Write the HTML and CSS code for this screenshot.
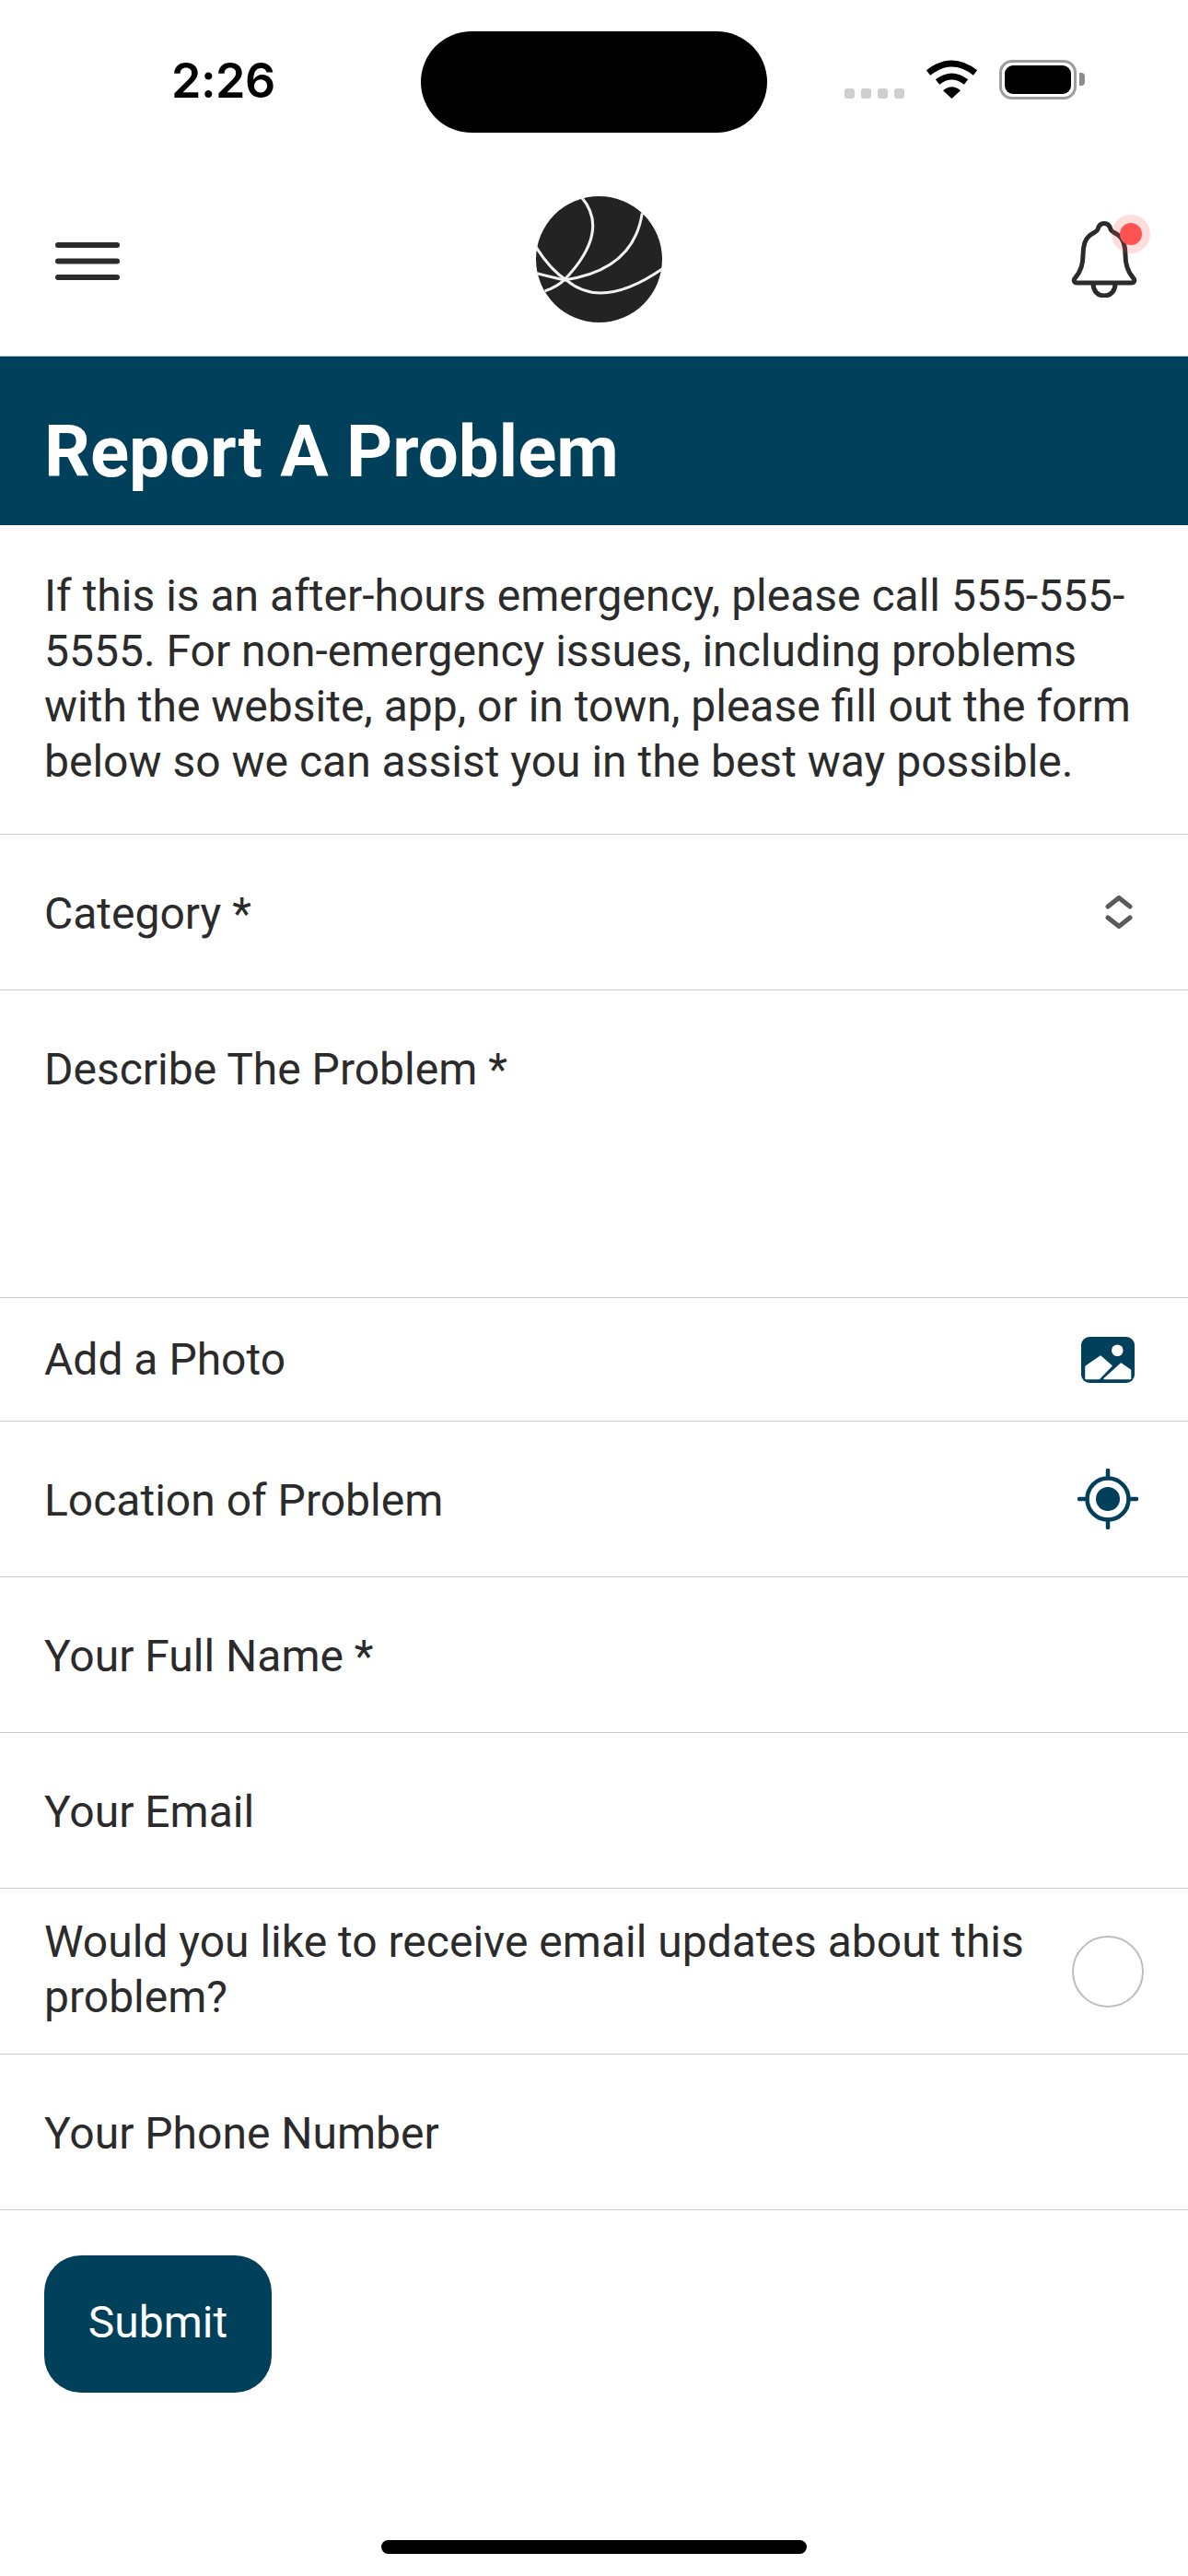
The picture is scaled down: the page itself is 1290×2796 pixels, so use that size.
FILE: index.html
```html
<!DOCTYPE html>
<html lang="en">
<head>
  <meta charset="UTF-8">
  <meta name="viewport" content="width=device-width, initial-scale=1.0">
  <title>Report A Problem</title>
  <link rel="stylesheet" href="styles.css">
</head>
<body>
  <div class="status-bar">
    <span class="time">2:26</span>
    <div class="island"></div>
    <div class="signal">
      <i></i><i></i><i></i><i></i>
    </div>
    <svg class="wifi" viewBox="0 0 57 42" width="57" height="42">
      <path d="M3 14Q28.5 -6 54 14" fill="none" stroke="#000" stroke-width="7"/>
      <path d="M13 24Q28.5 12 44 24" fill="none" stroke="#000" stroke-width="7"/>
      <path d="M19 33.3Q28.5 25 38 33.3L28.5 42Z" fill="#000"/>
    </svg>
    <div class="battery"><div class="battery-level"></div></div>
    <div class="battery-nub"></div>
  </div>

  <header class="top-nav">
    <svg class="menu-icon" viewBox="0 0 70 41" width="70" height="41">
      <path d="M3 3H67M3 20.5H67M3 38H67" stroke="#2b2b2b" stroke-width="6" stroke-linecap="round"/>
    </svg>
    <svg class="logo" viewBox="123 70 410 410" width="137" height="137">
      <circle cx="328" cy="275" r="205" fill="#232323"/>
      <g fill="none" stroke="#f2f2f2" stroke-width="9">
        <path d="M270 72Q367 183 215 342"/>
        <path d="M468 125Q440 310 215 342"/>
        <path d="M123 235Q170 310 225 345Q340 440 535 305"/>
        <path d="M123 320Q180 335 215 342"/>
        <path d="M215 342Q190 365 152 378"/>
      </g>
    </svg>
    <div class="bell">
      <svg viewBox="0 0 72 83" width="72" height="83">
        <path d="M36 2.5C32 2.5 30 5 29 9C28 12 25 12 21 15C15 19 13 27 13 37C13 47 11 54 5 61C2 64 3 67 7 67H65C69 67 70 64 67 61C61 54 59 47 59 37C59 27 57 19 51 15C47 12 44 12 43 9C42 5 40 2.5 36 2.5Z" fill="none" stroke="#2b2b2b" stroke-width="5"/>
        <path d="M24 68C24 76 29 81 36 81C43 81 48 76 48 68" fill="none" stroke="#2b2b2b" stroke-width="5"/>
      </svg>
      <span class="bell-dot"></span>
    </div>
  </header>

  <h1 class="page-title">Report A Problem</h1>

  <p class="intro">If this is an after-hours emergency, please call 555-555-5555. For non-emergency issues, including problems with the website, app, or in town, please fill out the form below so we can assist you in the best way possible.</p>

  <form action="/" class="form">
    <div class="row row-tall">
      <span class="row-label">Category *</span>
      <svg class="chevrons" viewBox="0 0 30 36" width="30" height="36">
        <path d="M3 12L15 2.5L27 12M3 24L15 33.5L27 24" fill="none" stroke="#5a5a5a" stroke-width="5" stroke-linecap="round" stroke-linejoin="round"/>
      </svg>
    </div>
    <div class="row row-textarea"><span>Describe The Problem *</span></div>
    <div class="row row-short">
      <span>Add a Photo</span>
      <svg class="photo-icon" viewBox="0 0 58 50" width="58" height="50">
        <rect width="58" height="50" rx="9" fill="#01405a"/>
        <circle cx="39.3" cy="14.7" r="6.3" fill="#fff"/>
        <path d="M21 21L5 32V45.5H19.5L33 31.5Z" fill="#fff" stroke="#fff" stroke-width="1.5" stroke-linejoin="round"/>
        <path d="M43.3 29L53.5 36V45.5H25Z" fill="#fff" stroke="#fff" stroke-width="1.5" stroke-linejoin="round"/>
      </svg>
    </div>
    <div class="row row-tall">
      <span class="row-label">Location of Problem</span>
      <svg class="target-icon" viewBox="0 0 66 66" width="66" height="66">
        <circle cx="33" cy="33" r="22.5" fill="none" stroke="#01405a" stroke-width="4.5"/>
        <circle cx="33" cy="33" r="13" fill="#01405a"/>
        <path d="M33 2V10M33 56V64M2 33H10M56 33H64" stroke="#01405a" stroke-width="4.5" stroke-linecap="round"/>
      </svg>
    </div>
    <div class="row row-tall"><span class="row-label">Your Full Name *</span></div>
    <div class="row row-tall"><span class="row-label">Your Email</span></div>
    <div class="row row-toggle">
      <span class="toggle-label">Would you like to receive email updates about this problem?</span>
      <span class="radio"></span>
    </div>
    <div class="row row-tall"><span class="row-label">Your Phone Number</span></div>
    <button type="submit" class="submit-button">Submit</button>
  </form>

  <div class="home-bar"></div>
</body>
</html>
```

FILE: styles.css
```css
:root {
  --teal: #01405a;
  --text: #2b2b2b;
  --line: #cbcbcb;
}
* {
  box-sizing: border-box;
}
body {
  margin: 0;
  width: 1290px;
  height: 2796px;
  overflow: hidden;
  background: #fff;
  color: var(--text);
  font-family: Roboto, sans-serif;
  font-size: 48px;
  line-height: 60px;
}

/* status bar */
.status-bar {
  display: flex;
  align-items: flex-start;
  height: 177px;
  padding-left: 186px;
}
.time {
  width: 271px;
  margin-top: 58px;
  color: #000;
  font-family: Inter, sans-serif;
  font-size: 52px;
  font-weight: 600;
  line-height: 60px;
  letter-spacing: -0.5px;
}
.island {
  width: 376px;
  height: 110px;
  margin-top: 34px;
  border-radius: 55px;
  background: #000;
}
.signal {
  display: flex;
  gap: 7px;
  margin: 96px 0 0 84px;
}
.signal i {
  width: 11px;
  height: 11px;
  border-radius: 3px;
  background: #cfcfcf;
}
.wifi {
  margin: 65px 0 0 23px;
}
.battery {
  width: 84px;
  height: 43px;
  margin: 65px 0 0 23px;
  padding: 3px;
  border: 3.5px solid #9d9d9d;
  border-radius: 14px;
}
.battery-level {
  height: 100%;
  border-radius: 9px;
  background: #000;
}
.battery-nub {
  width: 6px;
  height: 14px;
  margin: 79px 0 0 3px;
  border-radius: 0 4px 4px 0;
  background: #8c8c8c;
}

/* nav */
.top-nav {
  display: grid;
  grid-template-columns: 1fr auto 1fr;
  align-items: center;
  height: 210px;
  padding: 0 50px 0 60px;
  border-bottom: 1px solid var(--line);
}
.menu-icon {
  margin-top: 4px;
}
.bell {
  position: relative;
  justify-self: end;
  width: 72px;
  height: 83px;
  margin-right: 5px;
}
.bell svg {
  display: block;
}
.bell-dot {
  position: absolute;
  top: 2px;
  left: 53px;
  width: 24px;
  height: 24px;
  border-radius: 50%;
  background: #ff5353;
  box-shadow: 0 0 0 9px rgba(255, 83, 83, 0.2);
}

.page-title {
  margin: 0;
  height: 183px;
  padding: 0 48px;
  background: var(--teal);
  color: #fff;
  font-size: 78px;
  font-weight: 700;
  line-height: 207px;
}
.intro {
  margin: 0;
  height: 336px;
  padding: 47px 48px 0;
  border-bottom: 1px solid var(--line);
}

/* form rows */
.row {
  display: flex;
  align-items: center;
  justify-content: space-between;
  padding: 0 48px;
  border-bottom: 1px solid var(--line);
}
.row-label {
  padding-top: 3px;
}
.row-tall {
  height: 169px;
}
.row-short {
  height: 134px;
}
.row-textarea {
  height: 334px;
  align-items: flex-start;
  padding-top: 56px;
}
.row-toggle {
  height: 180px;
}
.toggle-label {
  width: 1090px;
  margin-top: -3px;
}
.chevrons {
  margin-right: 12px;
}
.photo-icon {
  margin-right: 10px;
}
.target-icon {
  margin-right: 6px;
}
.radio {
  width: 78px;
  height: 78px;
  border: 2px solid #bdbdbd;
  border-radius: 50%;
}
.submit-button {
  display: block;
  width: 247px;
  height: 149px;
  margin: 49px 0 0 48px;
  padding-bottom: 6px;
  border: 0;
  border-radius: 40px;
  background: var(--teal);
  color: #fff;
  font-family: Roboto, sans-serif;
  font-size: 48px;
}
.home-bar {
  width: 462px;
  height: 15px;
  margin: 160px 0 0 414px;
  border-radius: 8px;
  background: #000;
}
```
